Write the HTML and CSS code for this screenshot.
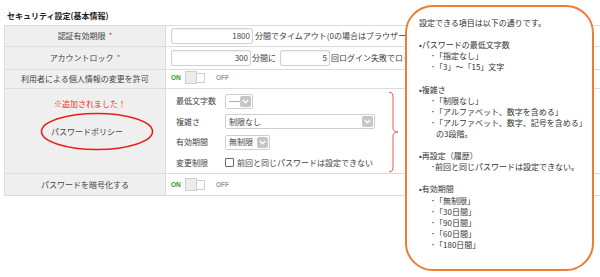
FILE: index.html
```html
<!DOCTYPE html>
<html lang="ja">
<head>
<meta charset="utf-8">
<title>セキュリティ設定</title>
<link rel="stylesheet" href="styles.css">
</head>
<body>
<div class="page">
  <h1 class="title">セキュリティ設定(基本情報)</h1>
  <div class="table">
    <div class="row r1">
      <div class="th">認証有効期限 <span class="req">*</span></div>
      <div class="td">
        <span class="input w82">1800</span><span class="after">分間でタイムアウト(0の場合はブラウザーを閉じるまで有効)</span>
      </div>
    </div>
    <div class="row r2">
      <div class="th">アカウントロック <span class="req">*</span></div>
      <div class="td">
        <span class="input w80">300</span><span class="mid">分間に</span><span class="input w50">5</span><span class="mid">回ログイン失敗でロックする</span>
      </div>
    </div>
    <div class="row r3">
      <div class="th">利用者による個人情報の変更を許可</div>
      <div class="td">
        <div class="toggle"><span class="on">ON</span><span class="switch"><span class="knob"></span><span class="rest"></span></span><span class="off">OFF</span></div>
      </div>
    </div>
    <div class="row r4">
      <div class="th policy">
        <span class="added">※追加されました！</span>
        <span class="plabel">パスワードポリシー</span>
      </div>
      <div class="td">
        <div class="policy-grid">
          <span class="plab">最低文字数</span>
          <span class="select w28"><span class="val">----</span><span class="arrow"><svg width="7" height="5" viewBox="0 0 7 5"><path d="M0.8 1 L3.5 3.8 L6.2 1" fill="none" stroke="#fff" stroke-width="1.3"/></svg></span></span>
          <span class="plab">複雑さ</span>
          <span class="select w150"><span class="val">制限なし</span><span class="arrow"><svg width="7" height="5" viewBox="0 0 7 5"><path d="M0.8 1 L3.5 3.8 L6.2 1" fill="none" stroke="#fff" stroke-width="1.3"/></svg></span></span>
          <span class="plab">有効期間</span>
          <span class="select w45"><span class="val">無制限</span><span class="arrow"><svg width="7" height="5" viewBox="0 0 7 5"><path d="M0.8 1 L3.5 3.8 L6.2 1" fill="none" stroke="#fff" stroke-width="1.3"/></svg></span></span>
          <span class="plab">変更制限</span>
          <span class="check"><span class="box"></span>前回と同じパスワードは設定できない</span>
        </div>
      </div>
    </div>
    <div class="row r5">
      <div class="th">パスワードを暗号化する</div>
      <div class="td">
        <div class="toggle"><span class="on">ON</span><span class="switch"><span class="knob"></span><span class="rest"></span></span><span class="off">OFF</span></div>
      </div>
    </div>
  </div>

  <svg class="ellipse" width="114" height="39" viewBox="0 0 114 39"><ellipse cx="57" cy="19.5" rx="55.5" ry="18" fill="none" stroke="#e8201c" stroke-width="1.6"/></svg>
  <svg class="bracket" width="14" height="86" viewBox="0 0 14 86"><path d="M3 3 Q7 3 7 7 L7 39 Q7 43 12 43 Q7 43 7 47 L7 79 Q7 83 3 83" fill="none" stroke="#f45a5a" stroke-width="1"/></svg>

  <div class="callout">
    <p>設定できる項目は以下の通りです。</p>
    <p class="blank"></p>
    <p>•パスワードの最低文字数</p>
    <p class="sub">･「指定なし」</p>
    <p class="sub">･「3」～「15」文字</p>
    <p class="blank"></p>
    <p>•複雑さ</p>
    <p class="sub">･「制限なし」</p>
    <p class="sub">･「アルファベット、数字を含める」</p>
    <p class="sub">･「アルファベット、数字、記号を含める」</p>
    <p class="sub2">の3段階。</p>
    <p class="blank"></p>
    <p>•再設定（履歴）</p>
    <p class="sub">･前回と同じパスワードは設定できない。</p>
    <p class="blank"></p>
    <p>•有効期間</p>
    <p class="sub">･「無制限」</p>
    <p class="sub">･「30日間」</p>
    <p class="sub">･「90日間」</p>
    <p class="sub">･「60日間」</p>
    <p class="sub">･「180日間」</p>
  </div>
</div>
</body>
</html>
```

FILE: styles.css
```css
* { box-sizing: border-box; }
html, body { margin: 0; padding: 0; background: #fff; }
body {
  font-family: "Noto Sans CJK JP", "Liberation Sans", sans-serif;
  font-size: 8px;
  color: #3a3a3a;
  width: 600px;
  height: 277px;
  overflow: hidden;
}
.page { position: relative; width: 600px; height: 277px; }

.title {
  margin: 0 0 4px 0;
  padding: 11px 0 0 7px;
  font-size: 8px;
  line-height: 10px;
  font-weight: bold;
  color: #222;
}

.table {
  margin-left: 4px;
  width: 600px;
  border-top: 1px solid #dcdcdc;
  border-left: 1px solid #dcdcdc;
}
.row {
  display: grid;
  grid-template-columns: 161px 1fr;
  border-bottom: 1px solid #dcdcdc;
}
.r1 { height: 21px; }
.r2 { height: 23px; }
.r3 { height: 19px; }
.r4 { height: 85px; }
.r5 { height: 22px; }

.th {
  background: #efefef;
  border-right: 1px solid #dcdcdc;
  display: flex;
  align-items: center;
  justify-content: center;
  line-height: 10px;
  color: #444;
  white-space: nowrap;
}
.req { color: #e8403a; margin-left: 3px; }
.td {
  display: flex;
  align-items: center;
  padding-left: 5px;
  white-space: nowrap;
  overflow: hidden;
  line-height: 10px;
}

.input {
  display: inline-flex;
  align-items: center;
  justify-content: flex-end;
  height: 16px;
  padding-right: 2px;
  border: 1px solid #d2d2d2;
  border-radius: 2px;
  background: #fff;
  box-shadow: inset 0 1px 2px rgba(0,0,0,0.07);
  color: #444;
  flex: none;
}
.w82 { width: 82px; }
.w80 { width: 80px; }
.w50 { width: 50px; margin-left: 4px; }
.after { margin-left: 2px; }
.mid { margin-left: 1px; }

.toggle { display: flex; align-items: center; }
.on {
  font-family: "Liberation Sans", sans-serif;
  font-weight: bold;
  font-size: 6.5px;
  color: #2f9a2f;
  width: 14px;
}
.switch { display: flex; align-items: center; width: 20px; height: 13px; }
.knob {
  width: 12px;
  height: 13px;
  background: #ececec;
  border: 1px solid #cfcfcf;
}
.rest {
  width: 9px;
  height: 10px;
  margin-left: -1px;
  background: #fff;
  border: 1px solid #cfcfcf;
}
.off {
  font-family: "Liberation Sans", sans-serif;
  font-weight: bold;
  font-size: 6.5px;
  color: #9a9a9a;
  margin-left: 11px;
}
.r3 .toggle { margin-top: -3px; }

.policy {
  flex-direction: column;
  justify-content: flex-start;
  padding-top: 10px;
}
.added { color: #f0302a; padding-left: 10px; }
.plabel { margin-top: 18px; padding-left: 4px; }

.r4 .td { align-items: flex-start; padding-left: 10px; padding-top: 2px; }
.policy-grid {
  display: grid;
  grid-template-columns: 49px auto;
  grid-auto-rows: 20.5px;
  align-items: center;
  justify-items: start;
}
.plab { color: #444; }
.select {
  display: flex;
  align-items: center;
  justify-content: space-between;
  height: 15px;
  padding: 1px 1px 1px 3px;
  border: 1px solid #cfcfcf;
  border-radius: 2px;
  background: #fff;
  color: #444;
}
.w28 { width: 28px; }
.w150 { width: 150px; }
.w45 { width: 45px; }
.arrow {
  display: flex;
  align-items: center;
  justify-content: center;
  width: 11px;
  height: 11px;
  background: #c6c6c6;
  border-radius: 2px;
}
.check { display: flex; align-items: center; color: #444; }
.box {
  width: 9px;
  height: 9px;
  border: 1px solid #666;
  border-radius: 1px;
  background: #fff;
  margin-right: 3px;
}

.ellipse { position: absolute; left: 40px; top: 112px; }
.bracket { position: absolute; left: 386px; top: 89px; }

.callout {
  position: absolute;
  left: 405px;
  top: 5px;
  width: 189px;
  height: 266px;
  border: 2px solid #ed7d31;
  border-radius: 28px;
  background: #fff;
  padding: 10px 6px 0 12px;
  color: #333;
  font-size: 8px;
  line-height: 11.1px;
}
.callout p { margin: 0; height: 11.1px; white-space: nowrap; }
.callout .sub { padding-left: 12px; }
.callout .sub2 { padding-left: 17px; }
```
